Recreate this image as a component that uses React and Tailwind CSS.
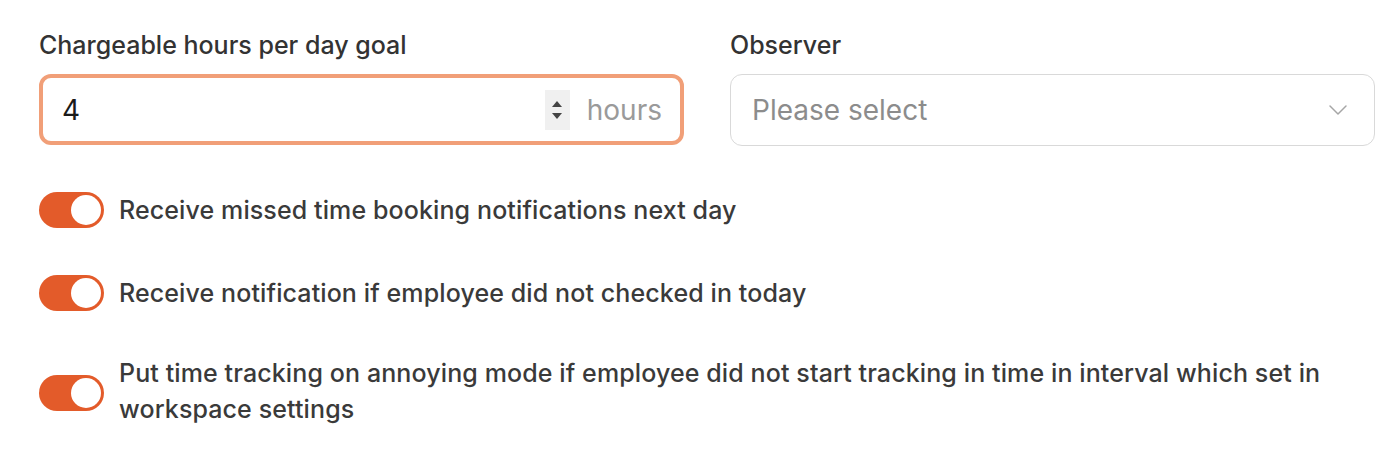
import React from "react";

function Toggle({ className = "" }) {
  return (
    <div className={`relative w-[65px] h-[36px] shrink-0 rounded-full bg-[#e35b2a] ${className}`}>
      <div className="absolute right-[3px] top-[3px] w-[30px] h-[30px] rounded-full bg-white" />
    </div>
  );
}

function ToggleRow({ children, className = "", toggleClass = "" }) {
  return (
    <div className={`flex items-center gap-[15px] ${className}`}>
      <Toggle className={toggleClass} />
      <span className="text-[25px] leading-[36px] font-medium tracking-[0.11px] text-[#3a3a3a]">{children}</span>
    </div>
  );
}

export default function App() {
  return (
    <div className="w-[1398px] h-[454px] bg-white pl-[39px] pt-[27px] font-['Inter','Liberation_Sans',sans-serif]">
      <div className="grid grid-cols-[645px_645px] gap-x-[46px] w-[1336px]">
        <div>
          <label className="block text-[25px] leading-[36px] font-medium text-[#333] mb-[11px]">Chargeable hours per day goal</label>
          <div className="flex items-center h-[71px] rounded-[12px] border-[4px] border-[#f19f78] pl-[19px] pr-[18px]">
            <span className="flex-1 text-[28px] text-[#1a1a1a]">4</span>
            <div className="flex flex-col items-center justify-center w-[25px] h-[40px] bg-[#f0f0f0] mr-[17px] gap-[6px]">
              <div className="w-0 h-0 border-l-[5px] border-r-[5px] border-b-[6px] border-l-transparent border-r-transparent border-b-[#444]" />
              <div className="w-0 h-0 border-l-[5px] border-r-[5px] border-t-[6px] border-l-transparent border-r-transparent border-t-[#444]" />
            </div>
            <span className="text-[28px] text-[#9a9a9a]">hours</span>
          </div>
        </div>
        <div>
          <label className="block text-[25px] leading-[36px] font-medium text-[#333] mb-[11px]">Observer</label>
          <div className="flex items-center h-[72px] rounded-[12px] border border-[#d9d9d9] pl-[21px] pr-[26px]">
            <span className="flex-1 text-[28px] text-[#8c8c8c]">Please select</span>
            <svg width="20" height="12" viewBox="0 0 20 12" fill="none">
              <path d="M2 2l8 8 8-8" stroke="#a6a6a6" strokeWidth="1.5" strokeLinecap="round" strokeLinejoin="round" />
            </svg>
          </div>
        </div>
      </div>
      <div className="flex flex-col mt-[46px]">
        <ToggleRow>Receive missed time booking notifications next day</ToggleRow>
        <ToggleRow className="mt-[47px]">Receive notification if employee did not checked in today</ToggleRow>
        <ToggleRow className="mt-[44px] w-[1330px]" toggleClass="mt-[4px]">
          Put time tracking on annoying mode if employee did not start tracking in time in interval which set in workspace settings
        </ToggleRow>
      </div>
    </div>
  );
}
